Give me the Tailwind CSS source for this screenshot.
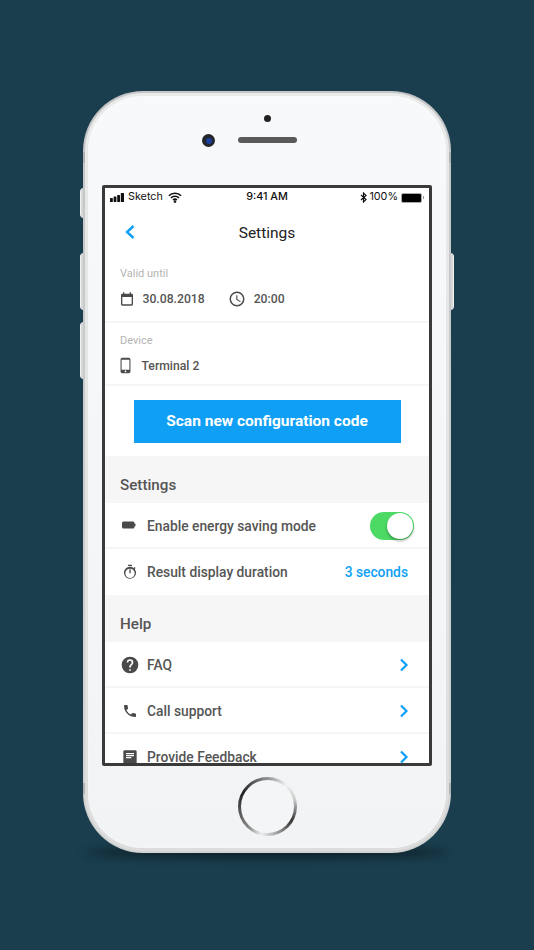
<!doctype html>
<html><head><meta charset="utf-8">
<script src="https://cdn.jsdelivr.net/npm/@tailwindcss/browser@4"></script>
</head>
<body class="m-0 bg-[#1a3e4e]">
<div class="w-[534px] h-[950px] bg-[#1a3e4e] overflow-hidden relative font-['Roboto',sans-serif]">
  <!-- shadow under phone -->
  <div class="absolute left-[85px] top-[847px] w-[364px] h-[11px] rounded-[50%] bg-black/50 blur-[5px]"></div>
  <!-- side buttons -->
  <div class="absolute left-[80px] top-[188px] w-[4px] h-[30px] bg-[#d5d7d8] rounded-l-sm border-l border-[#f2f2f2]"></div>
  <div class="absolute left-[80px] top-[253px] w-[4px] h-[57px] bg-[#d5d7d8] rounded-l-sm border-l border-[#f2f2f2]"></div>
  <div class="absolute left-[80px] top-[322px] w-[4px] h-[57px] bg-[#d5d7d8] rounded-l-sm border-l border-[#f2f2f2]"></div>
  <div class="absolute left-[450px] top-[253px] w-[4px] h-[57px] bg-[#d5d7d8] rounded-r-sm border-r border-[#f2f2f2]"></div>
  <!-- phone -->
  <div class="absolute left-[83px] top-[91px] w-[368px] h-[762px] rounded-[60px] bg-gradient-to-b from-[#c4c5c6] to-[#d2d3d3] p-[2px]">
    <div class="w-full h-full rounded-[58px] bg-gradient-to-b from-[#e9eaea] to-[#dcdddc] p-[3px]">
      <div class="relative w-full h-full rounded-[55px] bg-gradient-to-b from-[#f8f9fb] to-[#f1f3f5] shadow-[inset_0_0_2px_rgba(255,255,255,0.9)]">
        <!-- band marks -->
        <div class="absolute left-[-5px] top-[56px] w-[2px] h-[11px] bg-[#b0b2b3]"></div>
        <div class="absolute right-[-5px] top-[56px] w-[2px] h-[11px] bg-[#b0b2b3]"></div>
        <div class="absolute left-[-5px] bottom-[54px] w-[2px] h-[11px] bg-[#b0b2b3]"></div>
        <div class="absolute right-[-5px] bottom-[54px] w-[2px] h-[11px] bg-[#b0b2b3]"></div>
        <!-- sensors -->
        <div class="absolute left-[176px] top-[19px] w-[7px] h-[7px] rounded-full bg-[#222]"></div>
        <div class="absolute left-[150px] top-[41px] w-[59px] h-[6px] rounded-full bg-[#5a5a5a]"></div>
        <div class="absolute left-[114px] top-[38px] w-[13px] h-[13px] rounded-full bg-[#23272b] flex items-center justify-center"><div class="w-[6px] h-[6px] rounded-full bg-[#1d3f9c]"></div></div>
        <!-- home button -->
        <div class="absolute left-[150px] top-[681px] w-[59px] h-[59px] rounded-full p-[3px] bg-[conic-gradient(from_300deg,#222,#9a9a9a_18%,#f2f2f2_28%,#c8c8c8_38%,#333_50%,#a8a8a8_62%,#efefef_70%,#8a8a8a_78%,#222)]">
          <div class="w-full h-full rounded-full bg-[#f4f5f7]"></div>
        </div>
      </div>
    </div>
    <!-- screen -->
    <div class="absolute left-[19px] top-[94px] w-[330px] h-[581px] border-[3.5px] border-[#3a3a3a] rounded-[2px] bg-white overflow-hidden flex flex-col text-[#555]">
      <!-- status bar -->
      <div class="h-[19px] shrink-0 flex items-center pl-[5px] pr-[5px] text-[10.800px] text-[#111] font-['Inter',sans-serif] relative">
        <svg width="15" height="9" viewBox="0 0 15 9" class="shrink-0"><rect x="0" y="5" width="2.800" height="4" rx=".5" fill="#111"/><rect x="3.600" y="3.500" width="2.800" height="5.500" rx=".5" fill="#111"/><rect x="7.200" y="2" width="2.800" height="7" rx=".5" fill="#111"/><rect x="10.800" y="0" width="3.200" height="9" rx=".5" fill="#111"/></svg>
        <span class="ml-[3px]">Sketch</span>
        <svg width="14" height="11" viewBox="0 0 13 10" class="ml-[5px] shrink-0" fill="none" stroke="#111" stroke-width="1.500"><path d="M.8 3.400a8 8 0 0 1 11.400 0"/><path d="M2.800 5.400a5.200 5.200 0 0 1 7.400 0"/><path d="M4.700 7.300a2.500 2.500 0 0 1 3.600 0"/><circle cx="6.500" cy="8.800" r=".5" fill="#111"/></svg>
        <span class="absolute left-0 right-0 text-center font-medium">9:41 AM</span>
        <svg width="7" height="11" viewBox="0 0 7 11" class="ml-auto shrink-0" fill="none" stroke="#111" stroke-width="1.200"><path d="M1 3l5 4.600L3.500 10V1L6 3.400 1 8"/></svg>
        <span class="ml-[2px]">100%</span>
        <div class="ml-[3px] flex items-center shrink-0">
          <div class="w-[21px] h-[10px] border-[1.500px] border-[#aaa] rounded-[2px] bg-black"></div>
          <div class="w-[1px] h-[3px] bg-[#999] ml-[1px]"></div>
        </div>
      </div>
      <!-- nav -->
      <div class="h-[51px] shrink-0 relative flex items-center justify-center">
        <svg width="12" height="16" viewBox="0 0 12 16" class="absolute left-[19px] top-[17px]" fill="none" stroke="#0f9ff5" stroke-width="2.400"><path d="M9.500 2L3 8l6.500 6"/></svg>
        <span class="text-[15.500px] text-[#222] leading-none pt-[3px]">Settings</span>
      </div>
      <!-- valid until -->
      <div class="h-[65px] shrink-0 border-b-2 border-[#f5f5f5] pl-[15px] pt-[9px]">
        <div class="text-[11px] leading-[13px] text-[#b4b4b4]">Valid until</div>
        <div class="mt-[10px] flex items-center text-[12.200px] font-medium leading-[16px]">
          <svg width="16" height="16" viewBox="0 0 24 24" fill="#4a4a4a" class="shrink-0 ml-[-1.500px]"><path d="M19 4h-1V2h-2v2H8V2H6v2H5a2 2 0 0 0-2 2v14a2 2 0 0 0 2 2h14a2 2 0 0 0 2-2V6a2 2 0 0 0-2-2zm0 16H5V9h14v11z"/></svg>
          <span class="ml-[8px]">30.08.2018</span>
          <svg width="18" height="18" viewBox="0 0 24 24" fill="#4a4a4a" class="shrink-0 ml-[23px]"><path d="M12 2a10 10 0 1 0 0 20 10 10 0 0 0 0-20zm0 18a8 8 0 1 1 0-16 8 8 0 0 1 0 16zm.500-13H11v6l5.200 3.100.800-1.200-4.500-2.700V7z"/></svg>
          <span class="ml-[8px]">20:00</span>
        </div>
      </div>
      <!-- device -->
      <div class="h-[63px] shrink-0 border-b-2 border-[#f5f5f5] pl-[15px] pt-[11px]">
        <div class="text-[11px] leading-[13px] text-[#b4b4b4]">Device</div>
        <div class="mt-[10px] flex items-center text-[12.200px] font-medium leading-[16px]">
          <svg width="17" height="17" viewBox="0 0 24 24" fill="#4a4a4a" class="shrink-0 ml-[-3px]"><path d="M16.500 1h-9A2.500 2.500 0 0 0 5 3.500v17A2.500 2.500 0 0 0 7.500 23h9a2.500 2.500 0 0 0 2.500-2.500v-17A2.500 2.500 0 0 0 16.500 1zM12 21.500a1.200 1.200 0 1 1 0-2.400 1.200 1.200 0 0 1 0 2.400zM17.500 18h-11V4h11v14z"/></svg>
          <span class="ml-[7.500px]">Terminal 2</span>
        </div>
      </div>
      <!-- button -->
      <div class="h-[70px] shrink-0 flex justify-center pt-[14px]">
        <div class="w-[267px] h-[43px] bg-[#0f9ff5] text-white text-[15.500px] font-bold flex items-center justify-center">Scan new configuration code</div>
      </div>
      <!-- settings heading -->
      <div class="h-[47px] shrink-0 bg-[#f6f6f6] pl-[15px] pt-[20px] text-[15.200px] font-medium leading-[19px]">Settings</div>
      <div class="h-[46px] shrink-0 border-b-2 border-[#f5f5f5] flex items-center text-[13.800px] font-medium relative">
        <svg width="14" height="8" viewBox="0 0 14 8" class="ml-[17px] shrink-0"><path d="M1.500 0.500h9.500a1.500 1.500 0 0 1 1.500 1.500v.8h1v2.400h-1V6a1.500 1.500 0 0 1-1.500 1.500H1.500A1.500 1.500 0 0 1 0 6V2A1.500 1.500 0 0 1 1.500.5z" fill="#4a4a4a"/></svg>
        <span class="ml-[11px] pt-[2px]">Enable energy saving mode</span>
        <div class="ml-auto mr-[15px] mt-[1px] w-[44px] h-[28px] rounded-full bg-[#4cd964] relative shrink-0">
          <div class="absolute right-[1px] top-[1px] w-[26px] h-[26px] rounded-full bg-white shadow-[0_2px_3px_rgba(0,0,0,0.3)]"></div>
        </div>
      </div>
      <div class="h-[46px] shrink-0 flex items-center text-[13.800px] font-medium">
        <svg width="16" height="16" viewBox="0 0 24 24" fill="#4a4a4a" class="ml-[17px] shrink-0"><path d="M15 1H9v2h6V1zm-4 13h2V8h-2v6zm8-6.600 1.400-1.400c-.400-.500-.900-1-1.400-1.400L17.600 6A9 9 0 1 0 19 7.400zM12 21a7 7 0 1 1 0-14 7 7 0 0 1 0 14z"/></svg>
        <span class="ml-[9px]">Result display duration</span>
        <span class="ml-auto mr-[21px] text-[#0f9ff5]">3 seconds</span>
      </div>
      <!-- help heading -->
      <div class="h-[47px] shrink-0 bg-[#f6f6f6] pl-[15px] pt-[20px] text-[15.200px] font-medium leading-[19px]">Help</div>
      <div class="h-[46px] shrink-0 border-b-2 border-[#f5f5f5] flex items-center text-[13.800px] font-medium pt-[2px]">
        <svg width="20" height="20" viewBox="0 0 24 24" fill="#4a4a4a" class="ml-[15px] shrink-0"><path d="M12 2a10 10 0 1 0 0 20 10 10 0 0 0 0-20zm1 17h-2v-2h2v2zm2.070-7.750-.9.920C13.450 12.900 13 13.500 13 15h-2v-.500c0-1.100.450-2.100 1.170-2.830l1.240-1.260A2 2 0 1 0 10 9H8a4 4 0 1 1 8 0c0 .880-.360 1.680-.930 2.250z"/></svg>
        <span class="ml-[7px]">FAQ</span>
        <svg width="10" height="14" viewBox="0 0 10 14" class="ml-auto mr-[20px]" fill="none" stroke="#0f9ff5" stroke-width="2.200"><path d="M2 1.500L7.500 7 2 12.500"/></svg>
      </div>
      <div class="h-[46px] shrink-0 border-b-2 border-[#f5f5f5] flex items-center text-[13.800px] font-medium pt-[2px]">
        <svg width="16" height="16" viewBox="0 0 24 24" fill="#4a4a4a" class="ml-[17px] shrink-0"><path d="M6.600 10.800a15 15 0 0 0 6.600 6.600l2.200-2.200c.300-.300.700-.400 1-.200 1.100.400 2.300.600 3.600.600.600 0 1 .400 1 1V20c0 .600-.400 1-1 1A17 17 0 0 1 3 4c0-.600.400-1 1-1h3.500c.600 0 1 .400 1 1 0 1.300.200 2.500.600 3.600.100.300 0 .700-.200 1l-2.300 2.200z"/></svg>
        <span class="ml-[9px]">Call support</span>
        <svg width="10" height="14" viewBox="0 0 10 14" class="ml-auto mr-[20px]" fill="none" stroke="#0f9ff5" stroke-width="2.200"><path d="M2 1.500L7.500 7 2 12.500"/></svg>
      </div>
      <div class="h-[46px] shrink-0 flex items-center text-[13.800px] font-medium">
        <svg width="16" height="16" viewBox="0 0 24 24" fill="#4a4a4a" class="ml-[17px] shrink-0"><path d="M20 2H4a2 2 0 0 0-2 2v18H20a2 2 0 0 0 2-2V4a2 2 0 0 0-2-2zM6 9h12v2H6V9zm8 5H6v-2h8v2zm4-6H6V6h12v2z"/></svg>
        <span class="ml-[9px]">Provide Feedback</span>
        <svg width="10" height="14" viewBox="0 0 10 14" class="ml-auto mr-[20px]" fill="none" stroke="#0f9ff5" stroke-width="2.200"><path d="M2 1.500L7.500 7 2 12.500"/></svg>
      </div>
    </div>
  </div>
</div>
</body></html>
